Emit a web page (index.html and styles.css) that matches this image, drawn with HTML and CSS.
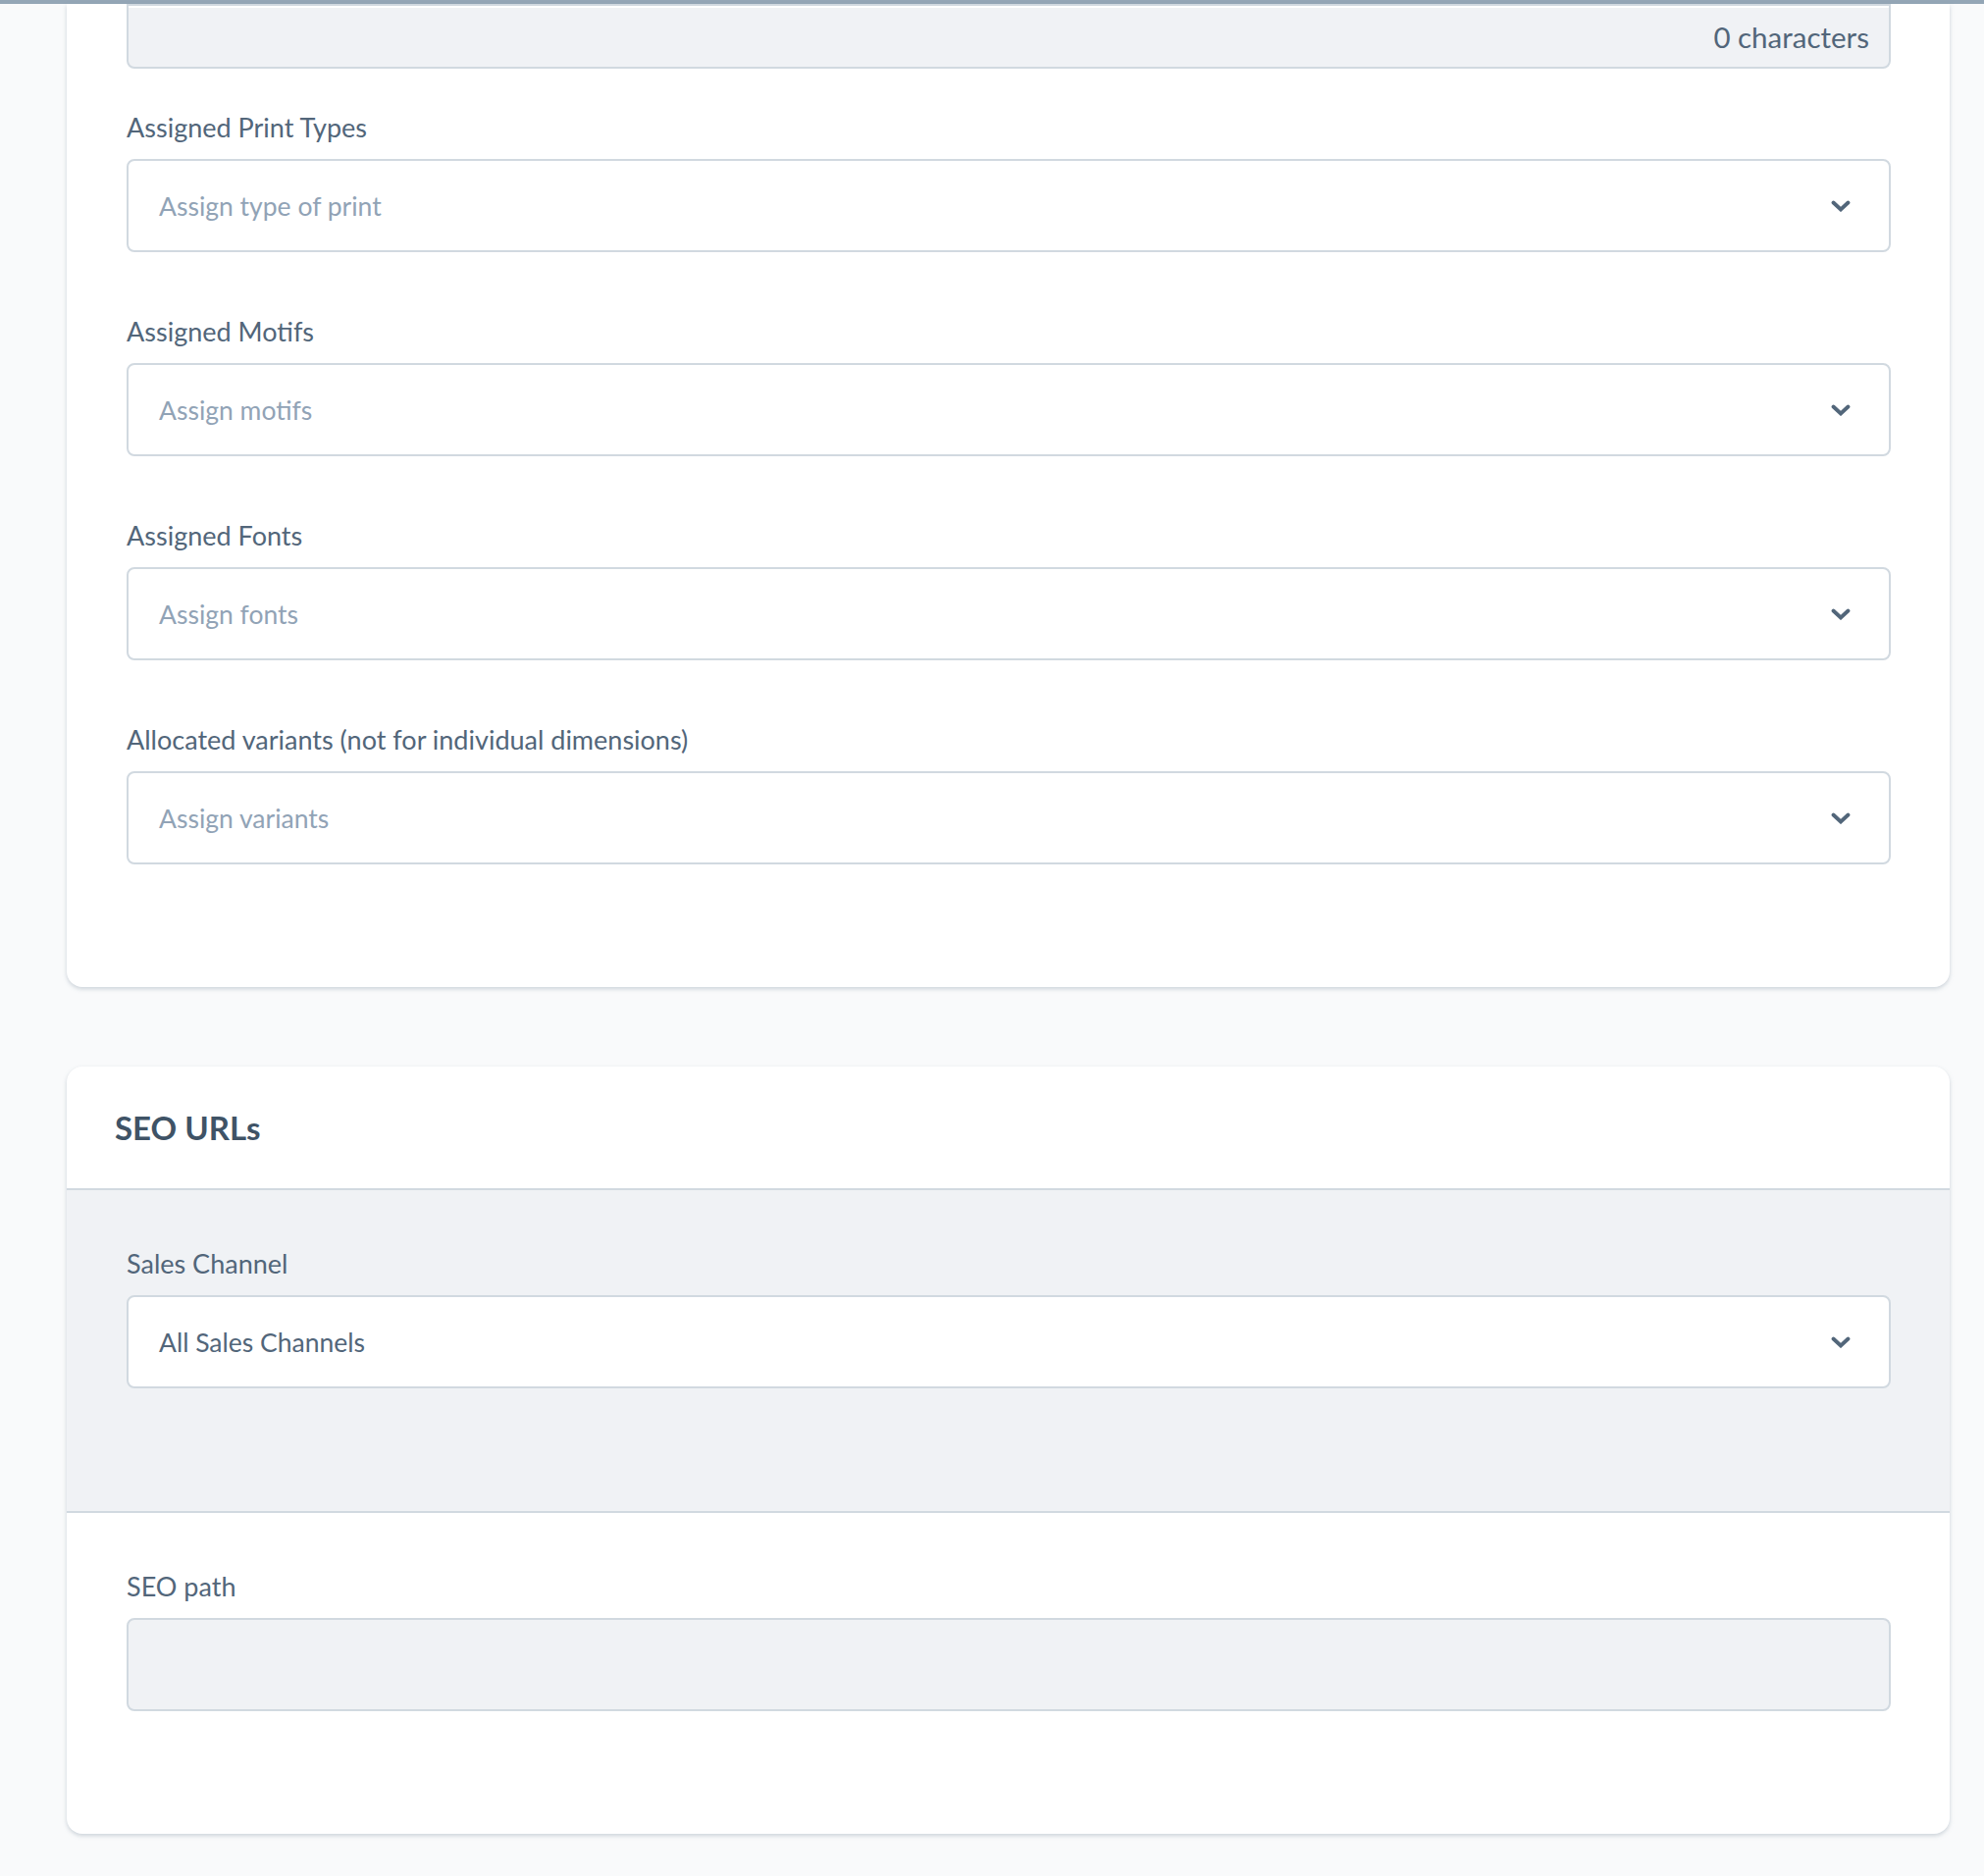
FILE: index.html
```html
<!DOCTYPE html>
<html lang="en">
  <head>
    <meta charset="UTF-8"/>
    <meta name="viewport" content="width=device-width, initial-scale=1.0">
    <link rel="stylesheet" href="styles.css">
    <title>Product detail - SEO</title>
  </head>
  <body>
    <div class="topBar"></div>
    <main class="content">
      <section class="card card_cut">
        <div class="card_body card_body_top">
          <div class="textareaFooter">
            <span class="textareaFooter_count">0 characters</span>
          </div>
          <div class="field">
            <p class="field_label">Assigned Print Types</p>
            <div class="select">
              <span class="select_placeholder">Assign type of print</span>
              <svg class="select_arrow" width="20" height="12" viewBox="0 0 20 12"><polyline points="2.5,2.5 10,9.5 17.5,2.5" fill="none" stroke="#52667a" stroke-width="3.8" stroke-linejoin="miter" stroke-linecap="round"/></svg>
            </div>
          </div>
          <div class="field">
            <p class="field_label">Assigned Motifs</p>
            <div class="select">
              <span class="select_placeholder">Assign motifs</span>
              <svg class="select_arrow" width="20" height="12" viewBox="0 0 20 12"><polyline points="2.5,2.5 10,9.5 17.5,2.5" fill="none" stroke="#52667a" stroke-width="3.8" stroke-linejoin="miter" stroke-linecap="round"/></svg>
            </div>
          </div>
          <div class="field">
            <p class="field_label">Assigned Fonts</p>
            <div class="select">
              <span class="select_placeholder">Assign fonts</span>
              <svg class="select_arrow" width="20" height="12" viewBox="0 0 20 12"><polyline points="2.5,2.5 10,9.5 17.5,2.5" fill="none" stroke="#52667a" stroke-width="3.8" stroke-linejoin="miter" stroke-linecap="round"/></svg>
            </div>
          </div>
          <div class="field">
            <p class="field_label">Allocated variants (not for individual dimensions)</p>
            <div class="select">
              <span class="select_placeholder">Assign variants</span>
              <svg class="select_arrow" width="20" height="12" viewBox="0 0 20 12"><polyline points="2.5,2.5 10,9.5 17.5,2.5" fill="none" stroke="#52667a" stroke-width="3.8" stroke-linejoin="miter" stroke-linecap="round"/></svg>
            </div>
          </div>
        </div>
      </section>

      <section class="card">
        <div class="card_header">
          <h2 class="card_title">SEO URLs</h2>
        </div>
        <div class="card_body card_body_grey">
          <div class="field">
            <p class="field_label">Sales Channel</p>
            <div class="select">
              <span class="select_value">All Sales Channels</span>
              <svg class="select_arrow" width="20" height="12" viewBox="0 0 20 12"><polyline points="2.5,2.5 10,9.5 17.5,2.5" fill="none" stroke="#52667a" stroke-width="3.8" stroke-linejoin="miter" stroke-linecap="round"/></svg>
            </div>
          </div>
        </div>
        <div class="card_body">
          <div class="field">
            <p class="field_label">SEO path</p>
            <div class="input input_disabled"></div>
          </div>
        </div>
      </section>
    </main>
  </body>
</html>
```

FILE: styles.css
```css
body {
  margin: 0;
  background-color: #f9fafb;
  font-family: Lato, "Open Sans", sans-serif;
  color: #52667a;
}
.topBar {
  height: 4px;
  background-color: #94a6b6;
}
.content {
  padding: 0 35px 42px 68px;
}

.card {
  background-color: #ffffff;
  border-radius: 16px;
  box-shadow: 0 2px 4px 0 rgba(120, 138, 155, 0.35);
  margin-bottom: 81px;
  overflow: hidden;
}
.card_cut {
  border-top-left-radius: 0;
  border-top-right-radius: 0;
}
  .card_header {
    padding: 42px 49px;
    border-bottom: 2px solid #d1d9e0;
  }
  .card_title {
    margin: 0;
    font-size: 33px;
    line-height: 40px;
    font-weight: 700;
    color: #3f5366;
  }
  .card_body {
    padding: 57px 60px 62px 61px;
  }
  .card_body_top {
    padding-top: 0;
  }
  .card_body_grey {
    background-color: #f0f2f5;
    border-bottom: 2px solid #d1d9e0;
  }

.textareaFooter {
  height: 62px;
  margin-bottom: 42px;
  padding: 0 20px;
  display: flex;
  justify-content: flex-end;
  align-items: center;
  background-color: #f0f2f5;
  border: 2px solid #d1d9e0;
  border-radius: 0 0 8px 8px;
  box-shadow: inset 0 2px 0 #ffffff;
}
  .textareaFooter_count {
    font-size: 29.5px;
    color: #52667a;
  }

.field {
  margin-bottom: 63px;
}
  .field_label {
    margin: 0 0 14px 0;
    font-size: 27px;
    line-height: 36px;
    color: #52667a;
  }
  .select,
  .input {
    height: 95px;
    box-sizing: border-box;
    display: flex;
    align-items: center;
    padding: 0 39px 0 31px;
    background-color: #ffffff;
    border: 2px solid #d1d9e0;
    border-radius: 8px;
    font-size: 26.5px;
  }
  .select_placeholder {
    flex: 1;
    color: #91a3b6;
  }
  .select_value {
    flex: 1;
    color: #52667a;
  }
  .select_arrow {
    display: block;
  }
  .input_disabled {
    background-color: #f0f2f5;
  }
```
